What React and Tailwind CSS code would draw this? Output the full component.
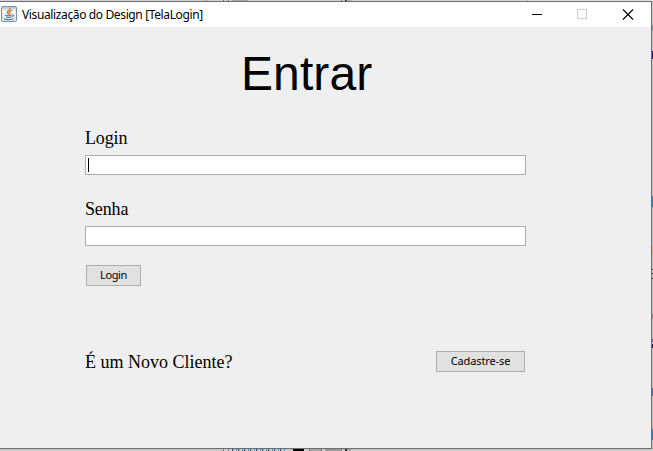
import React from 'react';

function JavaIcon() {
  return (
    <svg width="16" height="16" viewBox="0 0 16 16" fill="none" className="-mt-px block">
      <defs>
        <linearGradient id="tile" x1="0" y1="0" x2="0" y2="1">
          <stop offset="0" stopColor="#a9bccb" />
          <stop offset="0.3" stopColor="#f4f7fa" />
          <stop offset="1" stopColor="#d3dfe8" />
        </linearGradient>
      </defs>
      <rect x="0.5" y="0.5" width="15" height="15" rx="1" fill="url(#tile)" stroke="#7890a5" />
      <path d="M9.3 1.8C10 4 5.8 4.6 6.4 6.6c.2.7.9 1.1 1.2 1.9M10.8 4.3C8 5.5 7.9 6.2 8.7 7.1c.4.6 0 1.1-.3 1.4" stroke="#e8661c" strokeWidth="1.3" />
      <path d="M4 9.2c1.8.8 5 .8 6.7 0M5 11c1.5.6 3.7.6 5.1 0M11 8.8c2-.5 2.1 1.6-.2 2.2M3.2 12.6c-.7 1.3 7.6 1.4 9 .2" stroke="#3a6a90" strokeWidth="1" />
    </svg>
  );
}

function TitleBar() {
  return (
    <header className="flex h-[25px] items-center bg-white pl-px">
      <JavaIcon />
      <h1 className="ml-[5px] whitespace-nowrap font-['Noto_Sans',sans-serif] text-[12px] leading-[16px] tracking-[-0.37px]">
        Visualização do Design [TelaLogin]
      </h1>
      <div className="ml-auto flex items-center pr-[16px]">
        <svg width="103" height="12" viewBox="0 0 103 12" className="block" shapeRendering="crispEdges">
          <path d="M0 5h10v1H0z" fill="#000" />
          <rect x="45.5" y="0.5" width="9" height="9" fill="none" stroke="#ccc" />
          <path d="M91 0.5l10 10M101 0.5l-10 10" stroke="#000" strokeWidth="1.1" shapeRendering="auto" />
        </svg>
      </div>
    </header>
  );
}

function Field({ label, focused }) {
  return (
    <label className="block">
      <span className="block h-[26px] font-['Liberation_Serif',serif] text-[18px] leading-[18px] tracking-[-0.15px]">{label}</span>
      <span className="flex h-5 w-[441px] items-center border border-[#abadb3] bg-white pl-[2px]">
        {focused && <span className="h-[14px] w-px bg-black" />}
      </span>
    </label>
  );
}

function Button({ children, className }) {
  return (
    <button className={`flex h-[21px] items-center justify-center border border-[#adadad] bg-[#e1e1e1] pb-[2px] font-['Noto_Sans',sans-serif] text-[11px] leading-[15px] ${className}`}>
      {children}
    </button>
  );
}

const topEdge = 'bg-[linear-gradient(90deg,#d2d2d2_0_203px,#b9b5dd_203px_208px,#d2d2d2_208px_223px,#777_223px_224px,#d2d2d2_224px_228px,#777_228px_229px,#d2d2d2_229px_232px,#a4a4a4_232px_248px,#d2d2d2_248px_341px,#777_341px_342px,#d2d2d2_342px_345px,#29485d_345px_347px,#b5b9b5_347px_352px,#d6d8d6_352px_527px,#b5b5b5_527px_528px,#dedfde_528px)]';

const bottomEdge = 'bg-[linear-gradient(90deg,#c9c9c9_0_223px,#777_223px_224px,#d2d2d2_224px_228px,#777_228px_229px,#d2d2d2_229px_232px,transparent_232px_285px,#c7c7c7_285px_293px,#000_293px_304px,#cfcfcf_304px_309px,#777_309px_310px,#a5a5a5_310px_321px,#777_321px_322px,#c9c9c9_322px_325px,#999_325px_341px,#777_341px_342px,#c9c9c9_342px_345px,#333_345px_347px,#aaa_347px_351px,#c9c9c9_351px)]';

const marks = [
  ['mt-[24px]', 'h-[6px]', 'bg-[#7898ac]'],
  ['mt-[20px]', 'h-[8px]', 'bg-[#211a91]'],
  ['mt-[137px]', 'h-[11px]', 'bg-[#3385b4]'],
  ['mt-[40px]', 'h-[7px]', 'bg-[#e0b477]'],
  ['mt-[15px]', 'h-px', 'bg-[#333333]'],
  ['mt-[3px]', 'h-px', 'bg-[#333333]'],
  ['mt-[4px]', 'h-px', 'bg-[#333333]'],
  ['mt-[35px]', 'h-[5px]', 'bg-[#a5849d]'],
  ['mt-[20px]', 'h-[3px]', 'bg-[#6666b0]'],
  ['mt-[2px]', 'h-[4px]', 'bg-[#211a91]'],
  ['mt-[40px]', 'h-[8px]', 'bg-[#4a68b0]'],
  ['mt-[33px]', 'h-[11px]', 'bg-[#3385b4]'],
];

export default function App() {
  return (
    <div className="flex h-[451px] w-[653px] flex-col overflow-hidden bg-[#d0d0d0] text-black">
      <div className={`h-px shrink-0 ${topEdge}`} />
      <div className="flex h-[448px] shrink-0">
        <main className="flex w-[652px] flex-col border-y border-r border-[#6e6e6e] bg-[#efefef]">
          <TitleBar />
          <section className="flex flex-col pl-[85px]">
            <h2 className="mt-[20px] h-[54px] pl-[156px] font-['Liberation_Sans',Arial,sans-serif] text-[48px] leading-[54px] tracking-[0.1px]">Entrar</h2>
            <form className="mt-[28px]" onSubmit={(e) => e.preventDefault()}>
              <Field label="Login" focused />
              <div className="mt-[25px]">
                <Field label="Senha" />
              </div>
              <Button className="ml-px mt-[19px] w-[55px] tracking-[-0.4px]">Login</Button>
            </form>
            <footer className="mt-[65px] flex w-[440px] items-center justify-between">
              <p className="h-[21px] whitespace-nowrap font-['Liberation_Serif',serif] text-[18px] leading-[22px]">É um Novo Cliente?</p>
              <Button className="w-[89px] tracking-[-0.12px]">Cadastre-se</Button>
            </footer>
          </section>
        </main>
        <div className="w-px bg-[#c8c8c8]">
          {marks.map(([gap, height, color], i) => (
            <div key={i} className={`${gap} ${height} ${color}`} />
          ))}
        </div>
      </div>
      <div className={`h-[2px] shrink-0 ${bottomEdge}`}>
        <div className="ml-[232px] h-[2px] w-[53px] bg-[repeating-linear-gradient(90deg,#39465c_0_1px,#c8b79a_1px_2px,#c9c9c9_2px_4px,#5d86ad_4px_5px,#d0d0d0_5px_6px)]" />
      </div>
    </div>
  );
}
